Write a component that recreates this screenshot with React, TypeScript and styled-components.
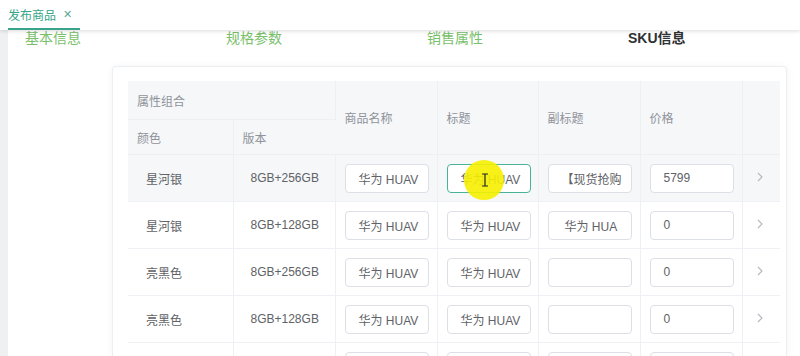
import React from 'react';
import styled, { createGlobalStyle } from 'styled-components';

const GlobalStyle = createGlobalStyle`
    html, body {
        margin: 0;
        padding: 0;
        background: #ffffff;
        overflow: hidden;
    }
    body {
        font-family: "Liberation Sans", "Noto Sans CJK SC", sans-serif;
        -webkit-font-smoothing: antialiased;
    }
`;

const Page = styled.div`
    width: 800px;
    height: 356px;
    display: flex;
    flex-direction: column;
    overflow: hidden;
`;

const Header = styled.div`
    position: relative;
    z-index: 2;
    height: 30px;
    flex: none;
    background: #fff;
    box-shadow: 0 1px 4px rgba(0, 0, 0, 0.15);
    display: flex;
    align-items: stretch;
    padding-left: 8px;
`;

const Tab = styled.div`
    display: flex;
    align-items: center;
    gap: 7px;
    padding-right: 8px;
    font-size: 12px;
    color: #36a489;
    border-bottom: 2px solid #3aa38c;
    box-sizing: border-box;
`;

const Close = styled.span`
    font-size: 11px;
    color: #5aa897;
`;

const Body = styled.div`
    flex: 1;
    display: flex;
    min-height: 0;
`;

const Strip = styled.div`
    width: 8px;
    flex: none;
    background: #eef0f2;
`;

const Main = styled.div`
    flex: 1;
    background: #fff;
    display: flex;
    flex-direction: column;
    min-width: 0;
`;

const Steps = styled.div`
    display: grid;
    grid-template-columns: repeat(4, 201px);
    height: 16px;
`;

const Step = styled.div<{ $active?: boolean }>`
    padding-left: 17px;
    font-size: 14px;
    line-height: 16px;
    color: ${p => (p.$active ? '#303133' : '#78c06a')};
    font-weight: ${p => (p.$active ? 700 : 400)};
`;

const Card = styled.div`
    margin: 20px 0 0 104px;
    width: 675px;
    flex: 1;
    box-sizing: border-box;
    padding: 14px 7px 0 15px;
    background: #fff;
    border: 1px solid #eceff2;
    border-bottom: none;
    border-radius: 4px 4px 0 0;
    box-shadow: 0 1px 8px rgba(0, 0, 0, 0.05);
    overflow: hidden;
`;

const Table = styled.table`
    border-collapse: collapse;
    table-layout: fixed;
    width: 652px;
    font-size: 12px;
`;

const Th = styled.th<{ $h?: number }>`
    background: #f5f7f9;
    color: #909399;
    font-weight: 400;
    text-align: left;
    padding: 0 9px;
    height: ${p => p.$h ?? 35}px;
    border-right: 1px solid #edf0f3;
    border-bottom: 1px solid #edf0f3;
    vertical-align: middle;
    &:last-child {
        border-right: none;
    }
`;

const Tr = styled.tr<{ $hover?: boolean }>`
    background: ${p => (p.$hover ? '#f5f7f9' : '#fff')};
`;

const Td = styled.td<{ $pad?: number }>`
    height: 46px;
    padding: 0 0 0 ${p => p.$pad ?? 18}px;
    color: #606266;
    border-right: 1px solid #eef0f3;
    border-bottom: 1px solid #eef0f3;
    white-space: nowrap;
    overflow: hidden;
`;

const Input = styled.div<{ $focus?: boolean; $pad?: number }>`
    width: 84px;
    height: 29px;
    box-sizing: border-box;
    border: 1px solid ${p => (p.$focus ? '#49b39a' : '#dcdfe6')};
    border-radius: 4px;
    background: #fff;
    padding-left: ${p => p.$pad ?? 13}px;
    display: flex;
    align-items: center;
    white-space: nowrap;
    color: #606266;
    font-size: 12px;
`;

const ArrowCell = styled.td`
    height: 46px;
    border-bottom: 1px solid #eef0f3;
    text-align: center;
    padding: 0 2px 0 0;
`;

const Spot = styled.div`
    position: absolute;
    left: 464px;
    top: 160px;
    width: 40px;
    height: 40px;
    border-radius: 50%;
    background: rgba(246, 240, 0, 0.9);
    pointer-events: none;
    z-index: 3;
`;

const Cursor = styled.svg`
    position: absolute;
    left: 481px;
    top: 173px;
    z-index: 4;
`;

const Chevron = () => (
    <svg width="6" height="10" viewBox="0 0 6 10">
        <path d="M1 1l4 4-4 4" fill="none" stroke="#b4b8bf" strokeWidth="1.1" />
    </svg>
);

interface IRow {
    color: string;
    version: string;
    name: string;
    title: string;
    subtitle: string;
    price: string;
}

// last row is cut off by the window, only the input tops show
const rows: IRow[] = [
    { color: '星河银', version: '8GB+256GB', name: '华为 HUAV', title: '华为 HUAV', subtitle: '【现货抢购', price: '5799' },
    { color: '星河银', version: '8GB+128GB', name: '华为 HUAV', title: '华为 HUAV', subtitle: '华为 HUA', price: '0' },
    { color: '亮黑色', version: '8GB+256GB', name: '华为 HUAV', title: '华为 HUAV', subtitle: '', price: '0' },
    { color: '亮黑色', version: '8GB+128GB', name: '华为 HUAV', title: '华为 HUAV', subtitle: '', price: '0' },
    { color: '', version: '', name: '', title: '', subtitle: '', price: '' }
];

const App = () => (
    <>
        <GlobalStyle />
        <Page>
            <Header>
                <Tab>
                    发布商品<Close>✕</Close>
                </Tab>
            </Header>
            <Body>
                <Strip />
                <Main>
                    <Steps>
                        <Step>基本信息</Step>
                        <Step>规格参数</Step>
                        <Step>销售属性</Step>
                        <Step $active>SKU信息</Step>
                    </Steps>
                    <Card>
                        <Table>
                            <colgroup>
                                <col style={{ width: 105 }} />
                                <col style={{ width: 102 }} />
                                <col style={{ width: 102 }} />
                                <col style={{ width: 101 }} />
                                <col style={{ width: 102 }} />
                                <col style={{ width: 102 }} />
                                <col style={{ width: 38 }} />
                            </colgroup>
                            <thead>
                                <tr>
                                    <Th colSpan={2} $h={38}>属性组合</Th>
                                    <Th rowSpan={2}>商品名称</Th>
                                    <Th rowSpan={2}>标题</Th>
                                    <Th rowSpan={2}>副标题</Th>
                                    <Th rowSpan={2}>价格</Th>
                                    <Th rowSpan={2} />
                                </tr>
                                <tr>
                                    <Th $h={34}>颜色</Th>
                                    <Th $h={34}>版本</Th>
                                </tr>
                            </thead>
                            <tbody>
                                {rows.map((r, i) => (
                                    <Tr key={i} $hover={i === 0}>
                                        <Td>{r.color}</Td>
                                        <Td $pad={17}>{r.version}</Td>
                                        <Td $pad={9}><Input>{r.name}</Input></Td>
                                        <Td $pad={9}><Input $focus={i === 0}>{r.title}</Input></Td>
                                        <Td $pad={9}><Input $pad={i === 0 ? 13 : 16}>{r.subtitle}</Input></Td>
                                        <Td $pad={9}><Input>{r.price}</Input></Td>
                                        <ArrowCell>{r.color && <Chevron />}</ArrowCell>
                                    </Tr>
                                ))}
                            </tbody>
                        </Table>
                    </Card>
                </Main>
            </Body>
        </Page>
        <Spot />
        <Cursor width="8" height="14" viewBox="0 0 8 14">
            <path d="M1 1h6M4 1v12M1 13h6" fill="none" stroke="#222" strokeWidth="1.2" />
        </Cursor>
    </>
);

export default App;
